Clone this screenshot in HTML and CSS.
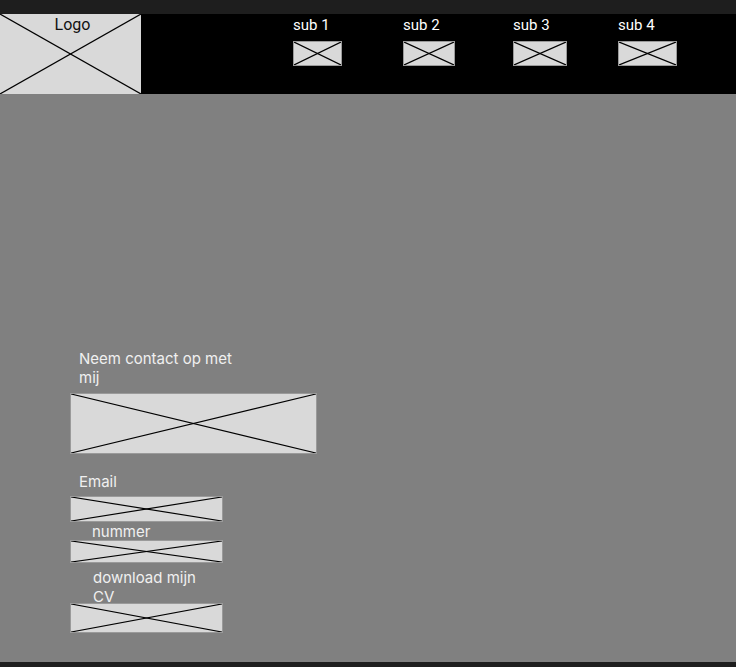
FILE: index.html
```html
<!DOCTYPE html>
<html lang="en">
<head>
  <meta charset="UTF-8">
  <title>Portfolio wireframe</title>
  <link rel="stylesheet" href="styles.css">
</head>
<body>

  <div class="topbar"></div>

  <header class="header">
    <div class="logo">
      <svg class="cross" viewBox="0 0 100 100" preserveAspectRatio="none">
        <line x1="0" y1="0" x2="100" y2="100" />
        <line x1="100" y1="0" x2="0" y2="100" />
      </svg>
      <span class="logo-text">Logo</span>
    </div>

    <nav class="nav">
      <div class="nav-item">
        <span>sub 1</span>
        <div class="ph sub-w1">
          <svg class="cross" viewBox="0 0 100 100" preserveAspectRatio="none"><line x1="0" y1="0" x2="100" y2="100" /><line x1="100" y1="0" x2="0" y2="100" /></svg>
        </div>
      </div>
      <div class="nav-item">
        <span>sub 2</span>
        <div class="ph sub-w2">
          <svg class="cross" viewBox="0 0 100 100" preserveAspectRatio="none"><line x1="0" y1="0" x2="100" y2="100" /><line x1="100" y1="0" x2="0" y2="100" /></svg>
        </div>
      </div>
      <div class="nav-item">
        <span>sub 3</span>
        <div class="ph sub-w3">
          <svg class="cross" viewBox="0 0 100 100" preserveAspectRatio="none"><line x1="0" y1="0" x2="100" y2="100" /><line x1="100" y1="0" x2="0" y2="100" /></svg>
        </div>
      </div>
      <div class="nav-item">
        <span>sub 4</span>
        <div class="ph sub-w4">
          <svg class="cross" viewBox="0 0 100 100" preserveAspectRatio="none"><line x1="0" y1="0" x2="100" y2="100" /><line x1="100" y1="0" x2="0" y2="100" /></svg>
        </div>
      </div>
    </nav>
  </header>

  <main class="main">
    <section class="contact">
      <p class="label contact-title">Neem contact op met mij</p>
      <div class="ph contact-box">
        <svg class="cross" viewBox="0 0 100 100" preserveAspectRatio="none"><line x1="0" y1="0" x2="100" y2="100" /><line x1="100" y1="0" x2="0" y2="100" /></svg>
      </div>

      <p class="label email-label">Email</p>
      <div class="ph field email-box">
        <svg class="cross" viewBox="0 0 100 100" preserveAspectRatio="none"><line x1="0" y1="0" x2="100" y2="100" /><line x1="100" y1="0" x2="0" y2="100" /></svg>
      </div>

      <p class="label number-label">nummer</p>
      <div class="ph field number-box">
        <svg class="cross" viewBox="0 0 100 100" preserveAspectRatio="none"><line x1="0" y1="0" x2="100" y2="100" /><line x1="100" y1="0" x2="0" y2="100" /></svg>
      </div>

      <p class="label cv-label">download mijn CV</p>
      <div class="ph field cv-box">
        <svg class="cross" viewBox="0 0 100 100" preserveAspectRatio="none"><line x1="0" y1="0" x2="100" y2="100" /><line x1="100" y1="0" x2="0" y2="100" /></svg>
      </div>
    </section>
  </main>

  <div class="bottombar"></div>

</body>
</html>
```

FILE: styles.css
```css
body {
  margin: 0;
  background: #1e1e1e;
  font-family: Inter, 'Liberation Sans', sans-serif;
  overflow: hidden;
}

.topbar {
  height: 14px;
  background: #1e1e1e;
}

.header {
  display: flex;
  height: 80px;
  background: #000;
}

/* placeholder boxes with a cross */
.ph {
  position: relative;
  background: #d9d9d9;
  box-sizing: border-box;
  border: 1px solid #9a9a9a;
}

.cross {
  position: absolute;
  inset: 0;
  width: 100%;
  height: 100%;
  display: block;
}

.cross line {
  stroke: #000;
  stroke-width: 1.2;
  vector-effect: non-scaling-stroke;
}

.logo {
  position: relative;
  width: 141px;
  height: 80px;
  background: #d9d9d9;
  text-align: center;
}

.logo-text {
  position: relative;
  display: block;
  padding-top: 1px;
  padding-left: 4px;
  font-family: Roboto, sans-serif;
  font-size: 16px;
  line-height: 20px;
  color: #111;
}

.nav {
  display: grid;
  grid-template-columns: 110px 110px 105px auto;
  margin-left: 152px;
  padding-top: 2px;
}

.nav-item {
  display: flex;
  flex-direction: column;
  align-items: flex-start;
}

.nav-item span {
  font-family: Roboto, sans-serif;
  font-size: 15px;
  line-height: 18px;
  color: #fff;
  height: 25px;
}

.sub-w1 { width: 49px; height: 25px; }
.sub-w2 { width: 52px; height: 25px; }
.sub-w3 { width: 54px; height: 25px; }
.sub-w4 { width: 59px; height: 25px; }

.main {
  height: 568px;
  background: #808080;
  box-sizing: border-box;
  padding: 255px 0 0 70px;
}

.contact {
  display: flex;
  flex-direction: column;
  align-items: flex-start;
}

.label {
  margin: 0;
  font-size: 15px;
  line-height: 19px;
  color: #f0f0f0;
}

.contact-title {
  width: 165px;
  padding-left: 9px;
}

.contact-box {
  width: 247px;
  height: 61px;
  margin-top: 6px;
}

.field {
  width: 153px;
}

.email-label {
  padding-left: 9px;
  margin-top: 18px;
}

.email-box {
  height: 26px;
  margin-top: 5px;
}

.number-label {
  padding-left: 22px;
  height: 18px;
}

.number-box {
  height: 23px;
}

.cv-label {
  width: 110px;
  padding-left: 23px;
  margin-top: 5px;
}

.cv-box {
  height: 30px;
  margin-top: -3px;
}

.bottombar {
  height: 6px;
  background: #1e1e1e;
}
```
